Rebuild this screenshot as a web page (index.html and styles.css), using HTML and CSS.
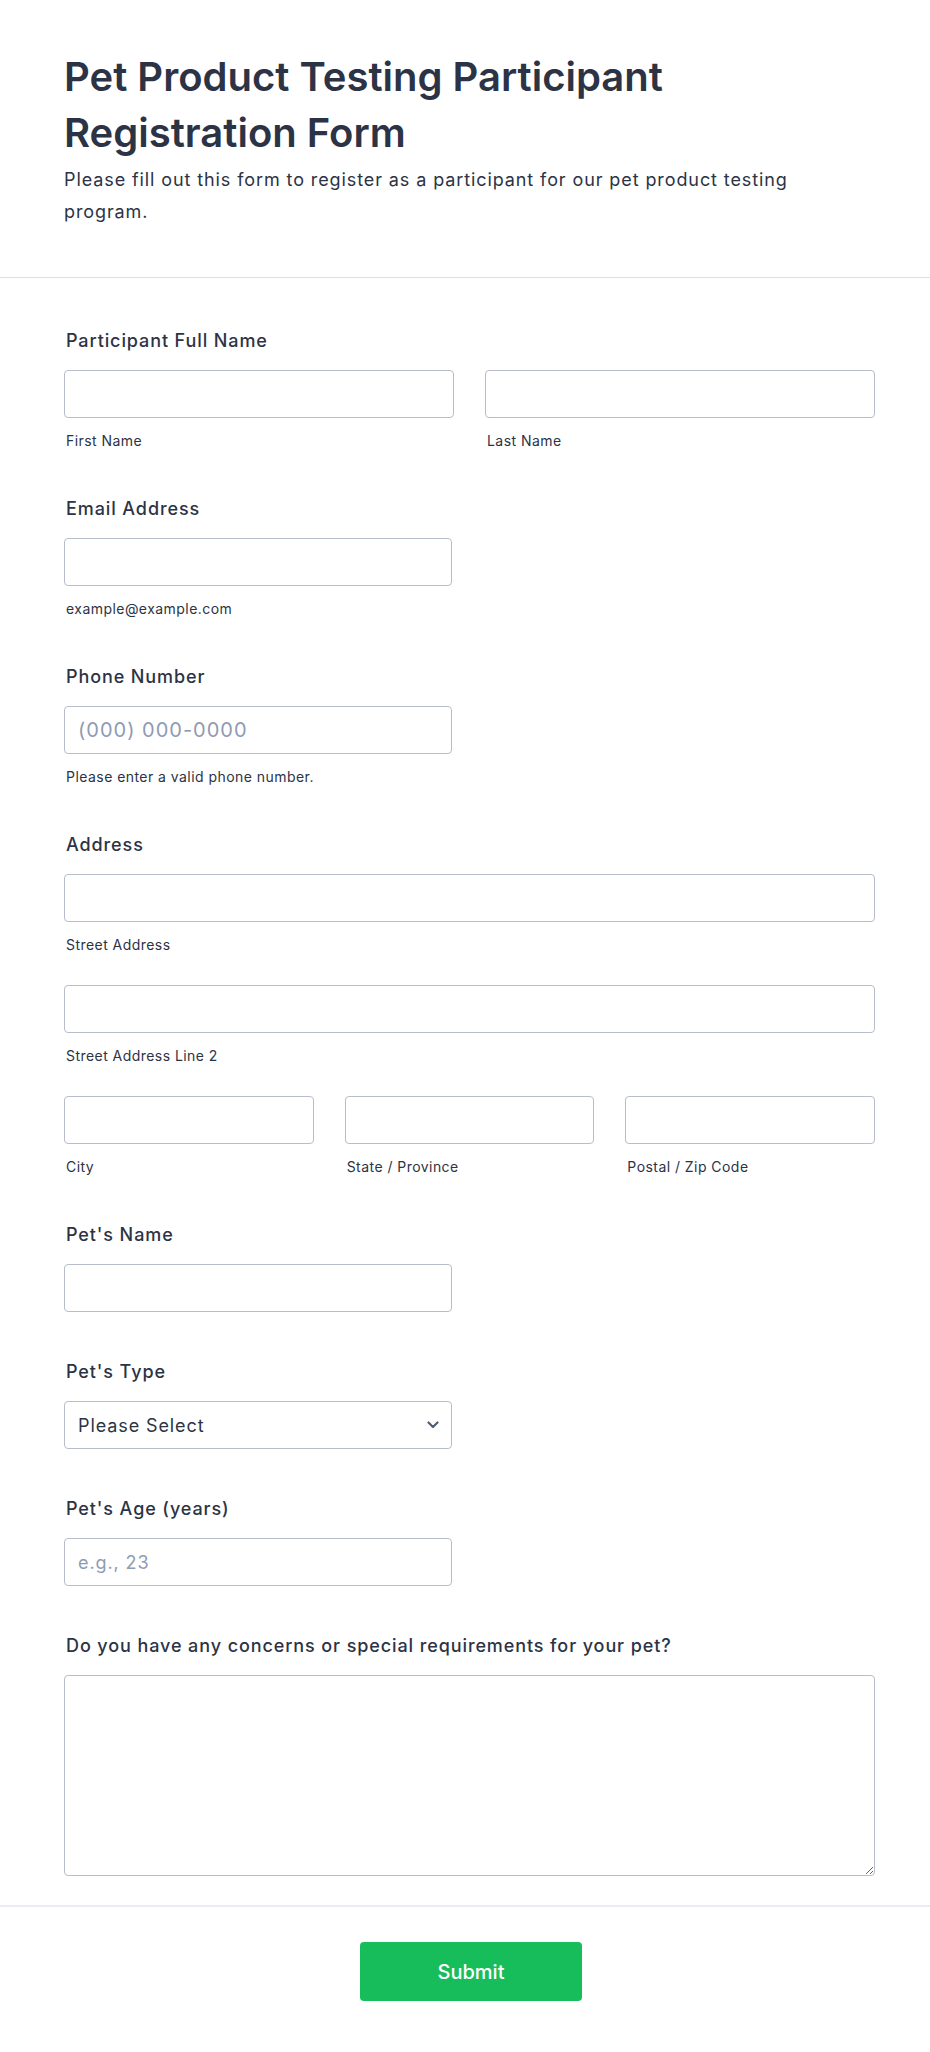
FILE: index.html
```html
<!DOCTYPE html>
<html lang="en">
<head>
<meta charset="utf-8">
<title>Pet Product Testing Participant Registration Form</title>
<link rel="stylesheet" href="styles.css">
</head>
<body>
<div class="form">
  <header class="form-header">
    <h1 class="form-title">Pet Product Testing Participant Registration Form</h1>
    <p class="form-sub">Please fill out this form to register as a participant for our pet product testing program.</p>
  </header>

  <div class="form-body">
    <div class="field">
      <label class="label">Participant Full Name</label>
      <div class="row two">
        <div class="cell">
          <input class="input" type="text">
          <span class="sublabel">First Name</span>
        </div>
        <div class="cell">
          <input class="input" type="text">
          <span class="sublabel">Last Name</span>
        </div>
      </div>
    </div>

    <div class="field">
      <label class="label">Email Address</label>
      <div class="cell half">
        <input class="input" type="email">
        <span class="sublabel">example@example.com</span>
      </div>
    </div>

    <div class="field">
      <label class="label">Phone Number</label>
      <div class="cell half">
        <input class="input phone" type="tel" placeholder="(000) 000-0000">
        <span class="sublabel">Please enter a valid phone number.</span>
      </div>
    </div>

    <div class="field">
      <label class="label">Address</label>
      <div class="address">
        <div class="cell">
          <input class="input" type="text">
          <span class="sublabel">Street Address</span>
        </div>
        <div class="cell">
          <input class="input" type="text">
          <span class="sublabel">Street Address Line 2</span>
        </div>
        <div class="row three">
          <div class="cell">
            <input class="input" type="text">
            <span class="sublabel">City</span>
          </div>
          <div class="cell">
            <input class="input" type="text">
            <span class="sublabel">State / Province</span>
          </div>
          <div class="cell">
            <input class="input" type="text">
            <span class="sublabel">Postal / Zip Code</span>
          </div>
        </div>
      </div>
    </div>

    <div class="field">
      <label class="label">Pet's Name</label>
      <div class="cell half">
        <input class="input" type="text">
      </div>
    </div>

    <div class="field">
      <label class="label">Pet's Type</label>
      <div class="cell half select-wrap">
        <select class="input select">
          <option>Please Select</option>
          <option>Dog</option>
          <option>Cat</option>
          <option>Bird</option>
          <option>Other</option>
        </select>
        <svg class="chevron" width="12" height="8" viewBox="0 0 12 8" aria-hidden="true">
          <path d="M1.5 1.5 L6 6 L10.5 1.5" fill="none" stroke="#4e5d78" stroke-width="2.2" stroke-linecap="round" stroke-linejoin="round"/>
        </svg>
      </div>
    </div>

    <div class="field">
      <label class="label">Pet's Age (years)</label>
      <div class="cell half">
        <input class="input" type="text" placeholder="e.g., 23">
      </div>
    </div>

    <div class="field">
      <label class="label">Do you have any concerns or special requirements for your pet?</label>
      <textarea class="input textarea"></textarea>
    </div>
  </div>

  <div class="form-footer">
    <button class="submit" type="button">Submit</button>
  </div>
</div>
</body>
</html>
```

FILE: styles.css
```css
* {
  box-sizing: border-box;
}

body {
  margin: 0;
  background: #ffffff;
  color: #2c3345;
  font-family: Inter, "Noto Sans", "Liberation Sans", sans-serif;
}

.form {
  width: 930px;
  min-height: 2052px;
  background: #ffffff;
}

.form-header {
  padding: 49px 55px 50px 64px;
  border-bottom: 1px solid #dcdee7;
}

.form-title {
  margin: 0;
  font-size: 40px;
  font-weight: 600;
  line-height: 56px;
  color: #2c3345;
}

.form-sub {
  margin: 3px 0 0;
  font-size: 18px;
  line-height: 31.5px;
  font-weight: 400;
  letter-spacing: 0.9px;
}

.form-body {
  display: flex;
  flex-direction: column;
  gap: 46px;
  padding: 49px 55px 29px 64px;
}

.field {
  display: flex;
  flex-direction: column;
}

.label {
  display: block;
  padding-left: 2px;
  margin-bottom: 16px;
  font-size: 18px;
  font-weight: 500;
  line-height: 27px;
  letter-spacing: 0.9px;
  color: #2c3345;
}

.row {
  display: grid;
  column-gap: 31px;
}

.row.two {
  grid-template-columns: 1fr 1fr;
}

.row.three {
  grid-template-columns: 1fr 1fr 1fr;
}

.address {
  display: flex;
  flex-direction: column;
  gap: 32px;
}

.cell {
  display: flex;
  flex-direction: column;
}

.cell.half {
  width: 388px;
}

.input {
  display: block;
  width: 100%;
  height: 48px;
  margin: 0;
  padding: 0 13px;
  border: 1px solid #b8bdcc;
  border-radius: 4px;
  background: #ffffff;
  color: #2c3345;
  font-family: Inter, "Noto Sans", "Liberation Sans", sans-serif;
  font-size: 18px;
  letter-spacing: 0.9px;
  outline: none;
}

.input.phone {
  font-size: 20px;
  letter-spacing: 1px;
}

.input::placeholder {
  color: #8f9bb3;
  opacity: 1;
}

.sublabel {
  display: block;
  margin-top: 15px;
  padding-left: 2px;
  font-size: 14px;
  line-height: 16px;
  letter-spacing: 0.45px;
  color: #2c3345;
}

.select-wrap {
  position: relative;
}

.select {
  appearance: none;
  -webkit-appearance: none;
  padding-right: 36px;
  cursor: pointer;
}

.chevron {
  position: absolute;
  right: 13px;
  top: 20px;
  pointer-events: none;
}

.textarea {
  height: 201px;
  padding: 10px 13px;
  resize: vertical;
}

.form-footer {
  border-top: 2px solid #ebecf2;
  padding: 35px 55px 52px 67px;
  display: flex;
  justify-content: center;
}

.submit {
  width: 222px;
  height: 59px;
  border: none;
  border-radius: 4px;
  background: #18bd5b;
  color: #ffffff;
  font-family: Inter, "Noto Sans", "Liberation Sans", sans-serif;
  font-size: 20px;
  font-weight: 500;
  cursor: pointer;
}
```
